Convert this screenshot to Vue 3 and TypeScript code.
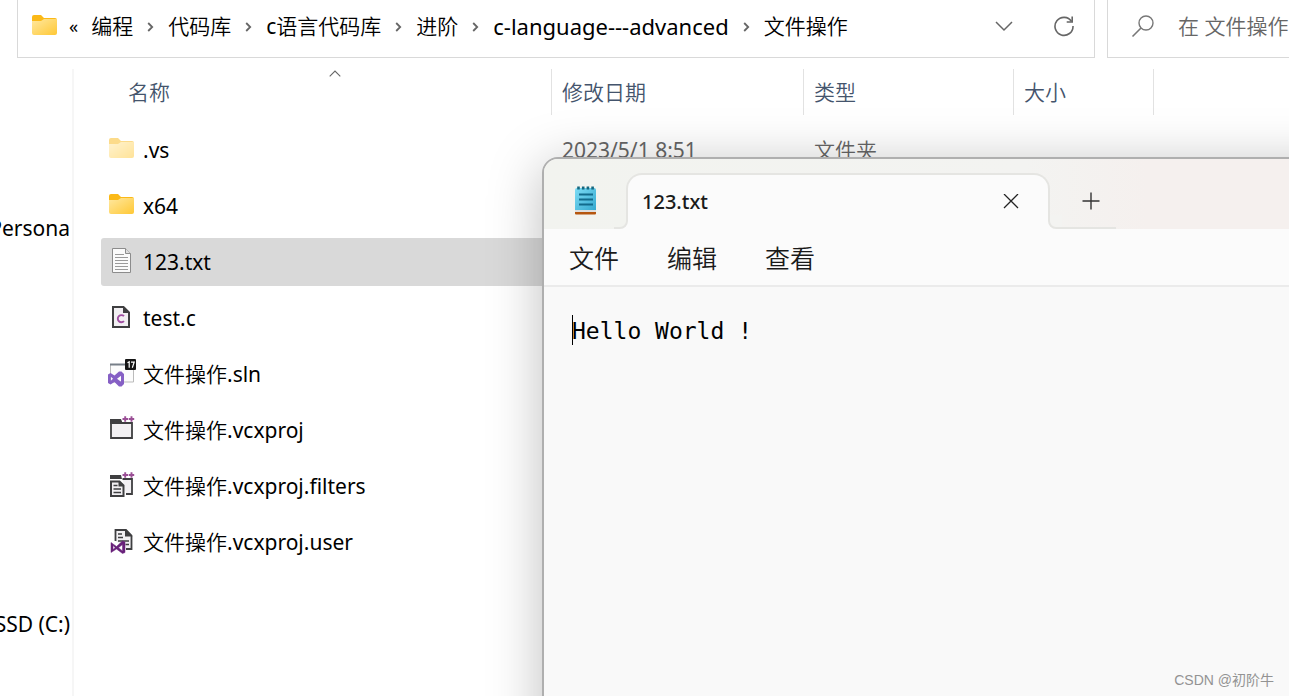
<script setup lang="ts">
import { ref } from 'vue'

type IconKind = 'folder' | 'text' | 'c' | 'sln' | 'project' | 'filters' | 'user'

interface FileEntry {
  name: string
  icon: IconKind
  hidden?: boolean
  modified?: string
  type?: string
}

const crumbs: string[] = ['编程', '代码库', 'c语言代码库', '进阶', 'c-language---advanced', '文件操作']
const isLatin = (text: string): boolean => /^[\x20-\x7e]+$/.test(text)

const columns = [
  { key: 'name', label: '名称', sorted: true },
  { key: 'modified', label: '修改日期', sorted: false },
  { key: 'type', label: '类型', sorted: false },
  { key: 'size', label: '大小', sorted: false },
]

const files: FileEntry[] = [
  { name: '.vs', icon: 'folder', hidden: true, modified: '2023/5/1 8:51', type: '文件夹' },
  { name: 'x64', icon: 'folder' },
  { name: '123.txt', icon: 'text' },
  { name: 'test.c', icon: 'c' },
  { name: '文件操作.sln', icon: 'sln' },
  { name: '文件操作.vcxproj', icon: 'project' },
  { name: '文件操作.vcxproj.filters', icon: 'filters' },
  { name: '文件操作.vcxproj.user', icon: 'user' },
]

const selected = ref('123.txt')
const query = ref('')
const menus: string[] = ['文件', '编辑', '查看']
const content = ref('Hello World !')
</script>

<template>
  <main class="desktop">
    <svg class="defs" aria-hidden="true">
      <defs>
        <linearGradient id="folderFace" x1="0" y1="0" x2="1" y2="1">
          <stop offset="0" stop-color="#ffe8a0" />
          <stop offset="1" stop-color="#ffc835" />
        </linearGradient>
        <linearGradient id="padFace" x1="0" y1="0" x2="1" y2="1">
          <stop offset="0" stop-color="#7ddcf5" />
          <stop offset="1" stop-color="#35a9cf" />
        </linearGradient>
        <symbol id="folder" viewBox="0 0 28 28">
          <path d="M1 5a2 2 0 0 1 2-2h7l3 3h11a2 2 0 0 1 2 2v4H1z" fill="#fbb917" />
          <path d="M1 9h9l3-2h13v14a2 2 0 0 1-2 2H3a2 2 0 0 1-2-2z" fill="url(#folderFace)" />
        </symbol>
      </defs>
    </svg>

    <header class="topbar">
      <nav class="address" aria-label="地址">
        <svg class="icon" viewBox="0 0 28 28" aria-hidden="true"><use href="#folder" /></svg>
        <button class="plain more" type="button">«</button>
        <ol class="crumbs">
          <li v-for="(crumb, i) in crumbs" :key="crumb">
            <svg v-if="i > 0" class="sep" viewBox="0 0 7 12" aria-hidden="true">
              <path d="M1.2 3l4 4-4 4" fill="none" stroke="#666" stroke-width="1.8" />
            </svg>
            <a href="#" :class="{ latin: isLatin(crumb) }">{{ crumb }}</a>
          </li>
        </ol>
        <div class="tools">
          <button class="plain" type="button" aria-label="历史记录">
            <svg width="18" height="22" viewBox="0 0 18 22">
              <path d="M1 7l8 8 8-8" fill="none" stroke="#666" stroke-width="1.5" />
            </svg>
          </button>
          <button class="plain" type="button" aria-label="刷新">
            <svg width="22" height="22" viewBox="0 0 22 22">
              <path d="M18.6 6.500A9 9 0 1 0 20 11" fill="none" stroke="#666" stroke-width="1.600" />
              <path d="M19.200 1.500v5.500h-5.500" fill="none" stroke="#666" stroke-width="1.600" />
            </svg>
          </button>
        </div>
      </nav>
      <label class="search">
        <svg width="24" height="24" viewBox="0 0 24 24" aria-hidden="true">
          <circle cx="15" cy="9" r="7" fill="none" stroke="#777" stroke-width="1.4" />
          <path d="M10 14l-8.5 8.5" stroke="#777" stroke-width="1.6" />
        </svg>
        <input v-model="query" type="text" placeholder="在 文件操作 中搜索" aria-label="搜索" />
      </label>
    </header>

    <div class="body">
      <nav class="sidebar" aria-label="导航">
        <a href="#">Persona</a>
        <a href="#">SSD (C:)</a>
      </nav>

      <table class="files">
        <colgroup>
          <col class="col-name" />
          <col class="col-date" />
          <col class="col-type" />
          <col class="col-size" />
        </colgroup>
        <thead>
          <tr>
            <th v-for="col in columns" :key="col.key" scope="col" :class="col.key">
              <button class="plain" type="button">{{ col.label }}</button>
              <svg v-if="col.sorted" class="sort" viewBox="0 0 12 7" aria-hidden="true">
                <path d="M.7 6.3L6 1l5.3 5.3" fill="none" stroke="#666" stroke-width="1.1" />
              </svg>
            </th>
          </tr>
        </thead>
        <tbody>
          <tr
            v-for="file in files"
            :key="file.name"
            :class="{ selected: selected === file.name }"
            @click="selected = file.name"
          >
            <td>
              <div class="file">
                <svg class="icon" :class="{ faded: file.hidden }" viewBox="0 0 28 28" aria-hidden="true">
                  <use v-if="file.icon === 'folder'" href="#folder" />
                  <g v-else-if="file.icon === 'text'">
                    <path d="M4.5 1.500h13l5 5v19h-18z" fill="#fafafa" stroke="#8c8c8c" />
                    <path d="M17.500 1.500v5h5" fill="#ddd" stroke="#8c8c8c" />
                    <path d="M7 7.500h9M7 10.500h13M7 13.500h13M7 16.500h13M7 19.500h13M7 22.500h13" stroke="#9a9a9a" />
                  </g>
                  <g v-else-if="file.icon === 'c'">
                    <path d="M5 4h10.500l5.500 5.500V24H5z" fill="#f2f0f3" stroke="#3f3f41" stroke-width="2" />
                    <path d="M15 3l7 7h-7z" fill="#3f3f41" />
                    <path d="M16 13.200a3.600 3.600 0 1 0 0 5" fill="none" stroke="#a04fa2" stroke-width="1.900" />
                  </g>
                  <g v-else-if="file.icon === 'sln'">
                    <path d="M2.500 5v18h23V5" fill="#fcfcfc" stroke="#bbb" />
                    <path d="M2 5.500h17" stroke="#777f88" stroke-width="2" />
                    <rect x="17" y="0" width="11" height="11" rx="1" fill="#151515" />
                    <path d="M19.500 3.700l1.700-1v6M23 3.200h3.200L24.300 8.700" fill="none" stroke="#fff" stroke-width="1.200" />
                    <path
                      d="M0 15.500L2.500 14l4 2.500L11 12.500h2.500L16 15v10l-2.500 2.500H11L6.500 23l-4 2.500L0 24zM2.800 17.800v4L5 19.800zM9 19.800l4 3v-6z"
                      fill="#8660c5" fill-rule="evenodd"
                    />
                  </g>
                  <g v-else-if="file.icon === 'project'">
                    <path d="M3 8h21v15H3z" fill="#f2f0f3" stroke="#3f3f41" stroke-width="1.800" />
                    <path d="M2 4h11l2 5H2z" fill="#3f3f41" />
                    <path d="M14 0h14v7H14z" fill="#fff" />
                    <path d="M14.500 4H20M17.200 1.200v5.500M20.700 4h5.500M23.500 1.200v5.500" stroke="#9b4f96" stroke-width="1.900" />
                  </g>
                  <g v-else-if="file.icon === 'filters'">
                    <path d="M18 23h6V8h-9.500" fill="#f2f0f3" stroke="#3f3f41" stroke-width="1.800" />
                    <path d="M2 4h11l1 4H2z" fill="#3f3f41" />
                    <path d="M14 0h14v7H14z" fill="#fff" />
                    <path d="M14.500 4H20M17.200 1.200v5.500M20.700 4h5.500M23.500 1.200v5.500" stroke="#9b4f96" stroke-width="1.900" />
                    <path d="M3 10.500h8.500l4 4V25H3z" fill="#f2f0f3" stroke="#3f3f41" stroke-width="2" />
                    <path d="M10.500 10v5.500H16" fill="#3f3f41" />
                    <path d="M5.500 14.500h4M5.500 18H13M5.500 21.500H13" stroke="#3f3f41" stroke-width="1.600" />
                  </g>
                  <g v-else>
                    <path d="M7.500 14V3H18l5.500 5.500V22H18" fill="#f2f0f3" stroke="#3f3f41" stroke-width="1.800" />
                    <path d="M17 2.500v7h7.500z" fill="#3f3f41" />
                    <path d="M10 7h4M10 10.500h5M10 14h11M17.500 17.500H21" stroke="#3f3f41" stroke-width="1.300" />
                    <path
                      d="M3 15.500l5.500 4 6-5.500 2.500 1v10.500l-2.500 1-6-4.500L3 25.500zM5 18.500v4L7.200 20.700zM10.500 20.700l4 3.200v-6.400z"
                      fill="#68217a" stroke="#68217a" stroke-width=".5" fill-rule="evenodd"
                    />
                  </g>
                </svg>
                <span>{{ file.name }}</span>
              </div>
            </td>
            <td>{{ file.modified }}</td>
            <td>{{ file.type }}</td>
            <td></td>
          </tr>
        </tbody>
      </table>
    </div>

    <section class="notepad" aria-label="记事本">
      <div class="tabstrip">
        <svg class="app-icon" viewBox="0 0 22 30" aria-hidden="true">
          <rect x="0" y="25" width="21" height="3.500" rx="1" fill="#b5560f" />
          <path d="M0 23h21v3H0z" fill="#dedede" />
          <path d="M0 4a2 2 0 0 1 2-2h17a2 2 0 0 1 2 2v20H0z" fill="url(#padFace)" />
          <path d="M3.500.500v3M8.200.500v3M12.900.500v3M17.600.500v3" stroke="#15677f" stroke-width="2.600" />
          <path d="M4 8.500h14M4 13.500h14M4 18.500h14" stroke="#126b8c" stroke-width="1.800" />
        </svg>
        <div class="tab">
          <svg class="foot left" viewBox="0 0 14 14" aria-hidden="true">
            <path d="M0 0h14v14H0z" fill="#fbfbfb" />
            <path d="M0 0h13v6a7 7 0 0 1-7 7H0z" fill="#f2f3ef" />
            <path d="M13 0v6a7 7 0 0 1-7 7H0" fill="none" stroke="#e5e5e2" stroke-width="2" />
          </svg>
          <span>123.txt</span>
          <button class="plain" type="button" aria-label="关闭标签页">
            <svg width="16" height="16" viewBox="0 0 16 16">
              <path d="M1 0l14 14M15 0L1 14" stroke="#222" stroke-width="1.300" />
            </svg>
          </button>
          <svg class="foot right" viewBox="0 0 14 14" aria-hidden="true">
            <path d="M0 0h14v14H0z" fill="#fbfbfb" />
            <path d="M14 0H1v6a7 7 0 0 0 7 7h6z" fill="#f3f3f1" />
            <path d="M1 0v6a7 7 0 0 0 7 7h6" fill="none" stroke="#e5e5e2" stroke-width="2" />
          </svg>
        </div>
        <button class="plain add" type="button" aria-label="新建标签页">
          <svg width="18" height="18" viewBox="0 0 18 18">
            <path d="M9 .500v17M.500 9h17" stroke="#333" stroke-width="1.400" />
          </svg>
        </button>
      </div>
      <div class="menubar" role="menubar">
        <button v-for="menu in menus" :key="menu" class="plain" type="button" role="menuitem">{{ menu }}</button>
      </div>
      <div class="editor">
        <span class="caret"></span>
        <textarea v-model="content" aria-label="文本编辑器" spellcheck="false"></textarea>
      </div>
    </section>

    <p class="watermark">CSDN @初阶牛</p>
  </main>
</template>

<style>
body {
  margin: 0;
  background: #fff;
}
</style>

<style scoped>
* {
  box-sizing: border-box;
}
.desktop {
  position: relative;
  display: flex;
  flex-direction: column;
  min-height: 100vh;
  overflow: hidden;
  background: #fff;
  color: #000;
  font: 400 21px/28px "Noto Sans", "Noto Sans CJK SC DemiLight", "Noto Sans CJK SC Light", "Noto Sans CJK SC", sans-serif;
}
.defs {
  position: absolute;
  width: 0;
  height: 0;
}
.plain {
  display: flex;
  align-items: center;
  padding: 0;
  border: 0;
  background: none;
  color: inherit;
  font: inherit;
}
a {
  color: inherit;
  text-decoration: none;
}
.icon {
  flex: none;
  width: 28px;
  height: 28px;
}
.faded {
  opacity: 0.5;
}

.topbar {
  display: flex;
  gap: 12px;
  height: 58px;
  padding-left: 17px;
}
.address {
  display: flex;
  flex: 1;
  align-items: center;
  min-width: 0;
  padding: 0 19px 6px 13px;
  border: 1px solid #d9d9d9;
  border-top: 0;
}
.more {
  margin: 0 13px 0 10px;
  font-size: 18px;
}
.crumbs {
  display: flex;
  gap: 14px;
  margin: 0;
  padding: 0;
  list-style: none;
  white-space: nowrap;
}
.crumbs li {
  display: flex;
  align-items: center;
  gap: 14px;
}
.crumbs .latin {
  font-size: 22px;
}
.sep {
  width: 7px;
  height: 12px;
}
.tools {
  display: flex;
  gap: 40px;
  margin-left: auto;
}
.search {
  display: flex;
  flex: 0 0 182px;
  align-items: center;
  gap: 23px;
  padding: 0 0 6px 23px;
  overflow: hidden;
  border: 1px solid #d9d9d9;
  border-width: 0 0 1px 1px;
}
.search svg {
  flex: none;
}
.search input {
  width: 200px;
  flex: none;
  padding: 0;
  border: 0;
  outline: 0;
  background: none;
  font: inherit;
}
.search input::placeholder {
  color: #666;
  opacity: 1;
}

.body {
  display: flex;
  flex: 1;
}
.sidebar {
  display: flex;
  flex: none;
  flex-direction: column;
  gap: 368px;
  width: 74px;
  margin-top: 11px;
  padding: 145px 2px 0 0;
  border-right: 2px solid #f6f6f6;
}
.sidebar a {
  display: flex;
  justify-content: flex-end;
  overflow: hidden;
  white-space: nowrap;
}
.files {
  align-self: flex-start;
  width: 1053px;
  margin: 3px 0 0 27px;
  border-spacing: 0 8px;
  table-layout: fixed;
}
.col-name { width: 451px; }
.col-date { width: 252px; }
.col-type { width: 210px; }
.col-size { width: 140px; }
th {
  position: relative;
  height: 49px;
  padding: 0 0 4px 10px;
  background: linear-gradient(#e2e2e2, #e2e2e2) right top / 1px 46px no-repeat;
  color: #44546c;
  font-weight: 400;
  text-align: left;
}
th.name {
  padding-left: 27px;
}
.sort {
  position: absolute;
  top: 1px;
  left: 228px;
  width: 12px;
  height: 7px;
}
td {
  height: 48px;
  padding: 0 0 0 10px;
  color: #666;
}
td:first-child {
  padding-left: 7px;
  border-radius: 3px 0 0 3px;
  color: #000;
}
.file {
  display: flex;
  align-items: center;
  gap: 7px;
}
.file .icon {
  margin-bottom: 2px;
}
.selected td {
  background: #d9d9d9;
}

.notepad {
  position: absolute;
  top: 157px;
  right: -60px;
  bottom: -60px;
  left: 542px;
  display: flex;
  flex-direction: column;
  overflow: hidden;
  border: 2px solid #afafaf;
  border-radius: 16px 0 0 0;
  background: #f9f9f9;
  box-shadow: 0 8px 54px rgba(0, 0, 0, 0.26);
}
.tabstrip {
  display: flex;
  flex: none;
  align-items: flex-end;
  height: 70px;
  background: linear-gradient(90deg, #f2f3ef 0%, #f3f3f1 60%, #f5f0ee 75%, #f5f0ee 100%);
}
.app-icon {
  width: 22px;
  height: 30px;
  margin: 0 29px 13px 31px;
}
.tab {
  position: relative;
  display: flex;
  align-items: center;
  justify-content: space-between;
  width: 424px;
  height: 56px;
  padding: 0 29px 0 14px;
  border: 2px solid #e5e5e2;
  border-bottom: 0;
  border-radius: 16px 16px 0 0;
  background: #fbfbfb;
  color: #1a1a1a;
  font-size: 20px;
  font-weight: 500;
}
.foot {
  position: absolute;
  bottom: 0;
  width: 14px;
  height: 14px;
}
.foot.left {
  left: -14px;
}
.foot.right {
  right: -14px;
}
.add {
  justify-content: center;
  width: 66px;
  height: 54px;
  padding-left: 16px;
  border-bottom: 2px solid #e5e5e2;
}
.menubar {
  display: flex;
  flex: none;
  gap: 48px;
  height: 58px;
  padding: 2px 25px 0;
  border-bottom: 2px solid #ebebeb;
  background: #fbfbfb;
  color: #1a1a1a;
  font-size: 25px;
}
.editor {
  position: relative;
  display: flex;
  flex: 1;
  padding: 28px;
}
.caret {
  position: absolute;
  top: 28px;
  left: 28px;
  width: 1px;
  height: 30px;
  background: #000;
}
.editor textarea {
  flex: 1;
  padding: 0;
  border: 0;
  outline: 0;
  background: none;
  color: #000;
  font: 23px/32px "DejaVu Sans Mono", "Noto Sans CJK SC", monospace;
  resize: none;
}
.watermark {
  position: absolute;
  right: 15px;
  bottom: 6px;
  margin: 0;
  color: #939393;
  font: 14px/20px "Liberation Sans", "Noto Sans CJK SC", sans-serif;
}
</style>
